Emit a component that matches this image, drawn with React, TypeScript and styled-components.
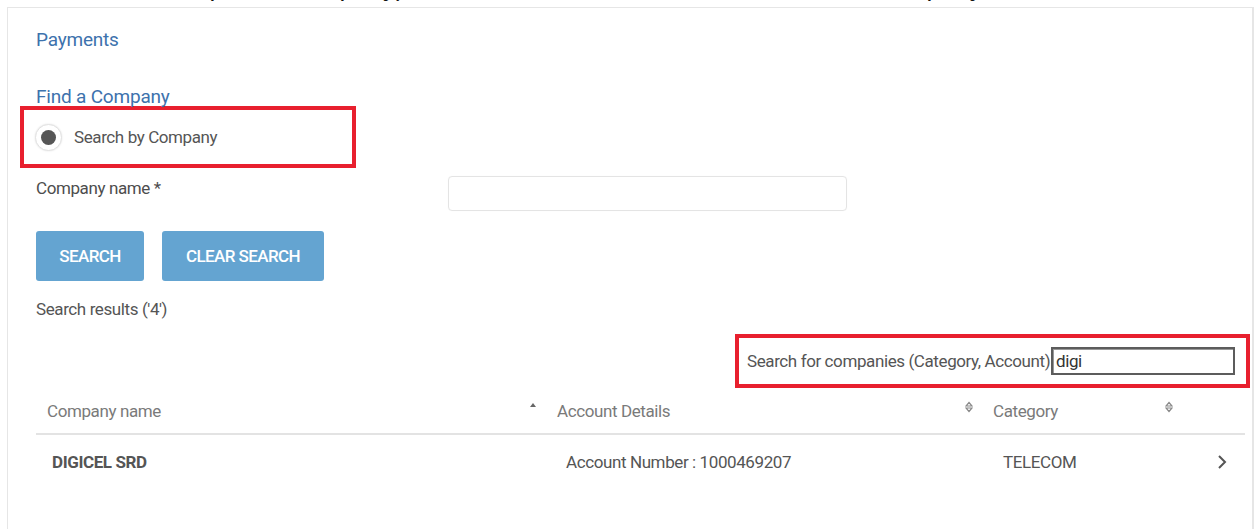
import React from "react";
import styled, { createGlobalStyle } from "styled-components";

const GlobalStyle = createGlobalStyle`
  html, body { margin: 0; padding: 0; background: #ffffff; }
  body { font-family: Roboto, "Liberation Sans", Arial, sans-serif; overflow: hidden; }
  * { box-sizing: border-box; }
`;

const Page = styled.div`
  width: 1256px;
  height: 529px;
  overflow: hidden;
  background: #fff;
`;

/* the line of document text above the panel, scrolled so only its lowest edge shows */
const DocLine = styled.div`
  height: 7px;
  overflow: hidden;
`;

const DocText = styled.div`
  font-family: "Liberation Sans", Arial, sans-serif;
  font-size: 26px;
  line-height: 30px;
  color: #111;
  margin-top: -28px;
  white-space: pre;
`;

const Panel = styled.section`
  margin-left: 7px;
  width: 1247px;
  height: 540px;
  border: 1px solid #e6e6e6;
  border-right-width: 2px;
  padding: 21px 0 0 28px;
`;

const Crumb = styled.h2`
  margin: 0;
  font-size: 19px;
  font-weight: 400;
  color: #3d72ad;
  line-height: 22px;
  letter-spacing: -0.2px;
`;

const SectionTitle = styled(Crumb).attrs({ as: "h3" })`
  margin-top: 35px;
`;

const Highlight = styled.div<{ $w: number; $h: number }>`
  width: ${(p) => p.$w}px;
  height: ${(p) => p.$h}px;
  border: 4px solid #e8202e;
  display: flex;
  align-items: center;
`;

const RadioBox = styled(Highlight)`
  margin: -2px 0 0 -16px;
  padding-left: 11px;
  gap: 12px;
`;

const RadioOuter = styled.span`
  width: 27px;
  height: 27px;
  border-radius: 50%;
  border: 1px solid #e2e2e2;
  box-shadow: 0 0 2px rgba(0, 0, 0, 0.12);
  display: flex;
  align-items: center;
  justify-content: center;
  background: #fff;
`;

const RadioDot = styled.span`
  width: 15px;
  height: 15px;
  border-radius: 50%;
  background: #565656;
`;

const Label = styled.span`
  font-size: 17px;
  line-height: 20px;
  color: #555;
  letter-spacing: -0.4px;
`;

const FieldRow = styled.div`
  display: flex;
  align-items: flex-start;
  margin-top: 8px;
`;

const FieldLabel = styled(Label)`
  width: 412px;
  padding-top: 2px;
  color: #4d4d4d;
`;

const TextInput = styled.div`
  width: 399px;
  height: 35px;
  border: 1px solid #e4e4e4;
  border-radius: 4px;
  box-shadow: 0 0 1px rgba(0, 0, 0, 0.05);
`;

const Buttons = styled.div`
  display: flex;
  gap: 18px;
  margin-top: 20px;
`;

const Button = styled.button<{ $w: number }>`
  width: ${(p) => p.$w}px;
  height: 50px;
  border: none;
  border-radius: 3px;
  background: #64a4d1;
  color: #fff;
  font-family: Roboto, "Liberation Sans", Arial, sans-serif;
  font-size: 17px;
  font-weight: 500;
  letter-spacing: -0.6px;
  text-transform: uppercase;
  padding: 0;
`;

const Results = styled(Label)`
  display: block;
  margin-top: 18px;
`;

const FilterWrap = styled.div`
  width: 1209px;
  display: flex;
  justify-content: flex-end;
  margin-top: 15px;
`;

const FilterBox = styled(Highlight)`
  padding: 0 11px 0 8px;
  margin-right: -5px;
  justify-content: space-between;
`;

const FilterInput = styled.div`
  width: 184px;
  height: 28px;
  border: 2px solid #5c5c5c;
  box-shadow: inset 1px 1px 0 #999;
  font-size: 17px;
  letter-spacing: -0.4px;
  color: #333;
  line-height: 24px;
  padding-left: 3px;
`;

const Table = styled.div`
  width: 1209px;
`;

const Columns = styled.div`
  display: grid;
  grid-template-columns: 510px 436px 200px 1fr;
`;

const HeadRow = styled(Columns)`
  height: 47px;
  border-bottom: 2px solid #e3e3e3;
  align-items: center;
`;

const HeadCell = styled.div`
  display: flex;
  align-items: center;
  justify-content: space-between;
  padding: 0 9px 0 11px;
  font-size: 17px;
  color: #7a7a7a;
  letter-spacing: -0.4px;
`;

const SortIcon = styled.svg`
  width: 8px;
  height: 12px;
  margin-top: -8px;
`;

const BodyRow = styled(Columns)`
  height: 54px;
  align-items: center;
`;

const BodyCell = styled.div<{ $bold?: boolean; $pad: number }>`
  padding-left: ${(p) => p.$pad}px;
  font-size: 17px;
  color: #555;
  font-weight: ${(p) => (p.$bold ? 700 : 400)};
  letter-spacing: -0.4px;
`;

const ChevronCell = styled.div`
  display: flex;
  justify-content: flex-end;
  padding-right: 18px;
`;

const SortBoth = () => (
  <SortIcon viewBox="0 0 8 12">
    <path d="M4 1.5 L7 5 H1 Z" fill="none" stroke="#888" strokeWidth="1.2" />
    <path d="M4 10.5 L7 7 H1 Z" fill="none" stroke="#888" strokeWidth="1.2" />
  </SortIcon>
);

const SortAsc = () => (
  <SortIcon viewBox="0 0 8 12">
    <path d="M4 2 L7 6 H1 Z" fill="#666" />
  </SortIcon>
);

const docSentence =
  "Then click to set up for a company), then enter the name of the second new company,";

export default function App() {
  return (
    <Page>
      <GlobalStyle />
      <DocLine>
        <DocText>{docSentence}</DocText>
      </DocLine>
      <Panel>
        <Crumb>Payments</Crumb>
        <SectionTitle>Find a Company</SectionTitle>
        <RadioBox $w={336} $h={62}>
          <RadioOuter>
            <RadioDot />
          </RadioOuter>
          <Label>Search by Company</Label>
        </RadioBox>
        <FieldRow>
          <FieldLabel>Company name *</FieldLabel>
          <TextInput />
        </FieldRow>
        <Buttons>
          <Button $w={108}>Search</Button>
          <Button $w={162}>Clear Search</Button>
        </Buttons>
        <Results>Search results ('4')</Results>
        <FilterWrap>
          <FilterBox $w={515} $h={54}>
            <Label>Search for companies (Category, Account)</Label>
            <FilterInput>digi</FilterInput>
          </FilterBox>
        </FilterWrap>
        <Table>
          <HeadRow>
            <HeadCell>
              Company name <SortAsc />
            </HeadCell>
            <HeadCell>
              Account Details <SortBoth />
            </HeadCell>
            <HeadCell>
              Category <SortBoth />
            </HeadCell>
            <div />
          </HeadRow>
          <BodyRow>
            <BodyCell $bold $pad={16}>DIGICEL SRD</BodyCell>
            <BodyCell $pad={20}>Account Number : 1000469207</BodyCell>
            <BodyCell $pad={21}>TELECOM</BodyCell>
            <ChevronCell>
              <svg width="10" height="16" viewBox="0 0 10 16">
                <path d="M2 2 L8 8 L2 14" fill="none" stroke="#555" strokeWidth="2" />
              </svg>
            </ChevronCell>
          </BodyRow>
        </Table>
      </Panel>
    </Page>
  );
}
